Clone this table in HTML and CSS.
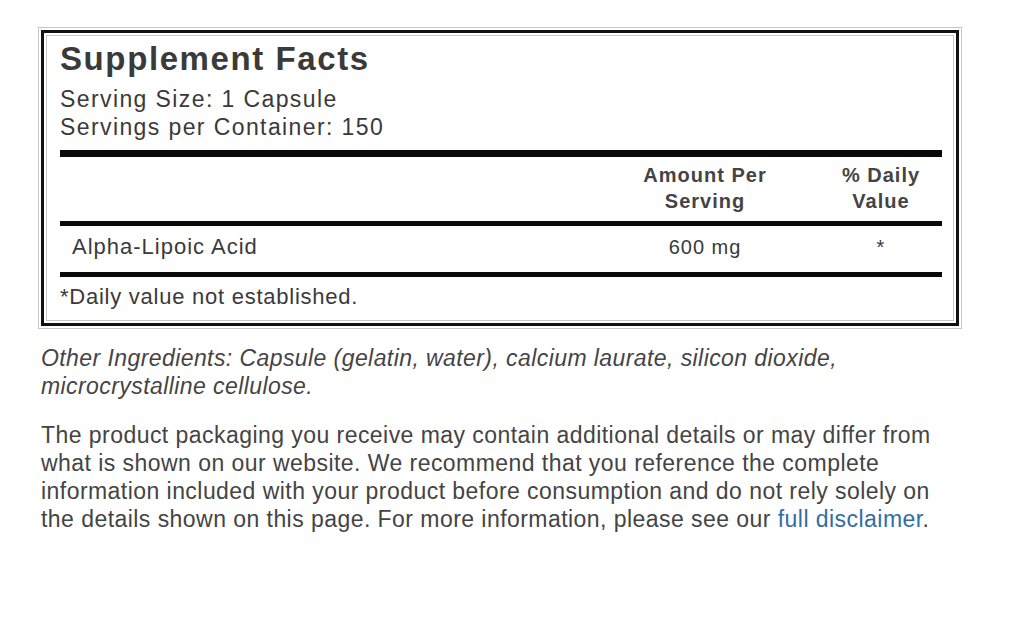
FILE: index.html
```html
<!DOCTYPE html>
<html lang="en">
<head>
<meta charset="utf-8">
<title>Supplement Facts</title>
<link rel="stylesheet" href="styles.css">
</head>
<body>
<div class="page">
  <section class="facts">
    <h2 class="facts-title">Supplement Facts</h2>
    <div class="serving">
      <div>Serving Size: 1 Capsule</div>
      <div>Servings per Container: 150</div>
    </div>
    <div class="rule rule-thick"></div>
    <div class="facts-row facts-head">
      <div class="col-name"></div>
      <div class="col-amount">Amount Per<br>Serving</div>
      <div class="col-dv">% Daily<br>Value</div>
    </div>
    <div class="rule"></div>
    <div class="facts-row facts-item">
      <div class="col-name">Alpha-Lipoic Acid</div>
      <div class="col-amount">600 mg</div>
      <div class="col-dv">*</div>
    </div>
    <div class="rule"></div>
    <p class="footnote">*Daily value not established.</p>
  </section>
  <p class="ingredients">Other Ingredients: Capsule (gelatin, water), calcium laurate, silicon dioxide, microcrystalline cellulose.</p>
  <p class="disclaimer">The product packaging you receive may contain additional details or may differ from what is shown on our website. We recommend that you reference the complete information included with your product before consumption and do not rely solely on the details shown on this page. For more information, please see our <a class="link" href="#">full disclaimer</a>.</p>
</div>
</body>
</html>
```
FILE: styles.css
```css
html, body {
  margin: 0;
  padding: 0;
  background: #ffffff;
}
body {
  font-family: "Liberation Sans", Arial, sans-serif;
  color: #3a3a3a;
}
.page {
  padding: 30px 0 0 41px;
  width: 918px;
}
.facts {
  border: 3px solid #111;
  box-shadow: 0 0 0 2px #fff, 0 0 0 3px #c8c8c8, inset 0 0 0 2px #fff, inset 0 0 0 3px #c8c8c8;
  padding: 7px 14px 12px 16px;
}
.facts-title {
  margin: 0;
  font-size: 33px;
  line-height: 38px;
  font-weight: bold;
  letter-spacing: 1.6px;
  color: #3a3a3a;
}
.serving {
  margin-top: 7px;
  font-size: 23px;
  line-height: 28px;
  letter-spacing: 1.4px;
}
.rule {
  height: 5px;
  background: #0a0a0a;
}
.rule-thick {
  margin-top: 9px;
  height: 7px;
}
.facts-row {
  display: grid;
  grid-template-columns: 1fr 130px 122px;
  column-gap: 50px;
  align-items: baseline;
}
.facts-head {
  padding: 5px 0 7px;
  font-size: 20px;
  line-height: 26px;
  font-weight: bold;
  letter-spacing: 1px;
  color: #444;
}
.facts-item {
  padding: 7px 0 11px;
  font-size: 20px;
  line-height: 28px;
  letter-spacing: 1px;
}
.facts-item .col-name {
  font-size: 22px;
  padding-left: 12px;
}
.col-amount, .col-dv {
  text-align: center;
}
.footnote {
  margin: 0;
  padding-top: 6px;
  font-size: 22px;
  line-height: 28px;
  letter-spacing: 0.75px;
}
.ingredients {
  margin: 18px 0 0;
  font-size: 23px;
  line-height: 28px;
  font-style: italic;
  letter-spacing: 0.42px;
  color: #444;
}
.disclaimer {
  margin: 21px 0 0;
  font-size: 23px;
  line-height: 28px;
  letter-spacing: 0.45px;
  color: #444;
}
.link {
  color: #2f6ea5;
  text-decoration: none;
}
```
